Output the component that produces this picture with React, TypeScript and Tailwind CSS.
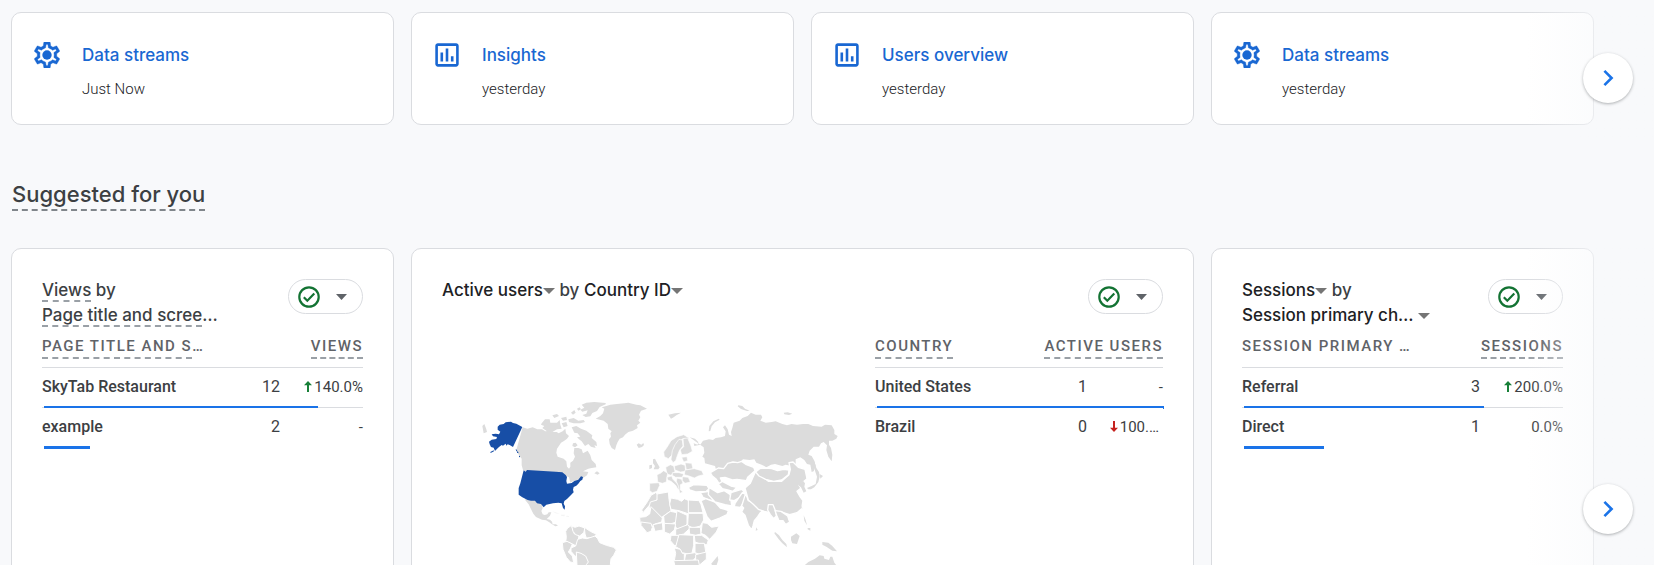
import type { ReactNode } from "react";
import { clsx } from "clsx";

type Recent = { title: string; time: string; icon: "settings" | "chart" };

type Row = {
  name: string;
  value: string;
  change: string;
  trend?: "up" | "down";
  share: number;
};

const recents: Recent[] = [
  { title: "Data streams", time: "Just Now", icon: "settings" },
  { title: "Insights", time: "yesterday", icon: "chart" },
  { title: "Users overview", time: "yesterday", icon: "chart" },
  { title: "Data streams", time: "yesterday", icon: "settings" },
];

const pageRows: Row[] = [
  { name: "SkyTab Restaurant", value: "12", change: "140.0%", trend: "up", share: 85.7 },
  { name: "example", value: "2", change: "-", share: 14.3 },
];

const countryRows: Row[] = [
  { name: "United States", value: "1", change: "-", share: 100 },
  { name: "Brazil", value: "0", change: "100.…", trend: "down", share: 0 },
];

const sessionRows: Row[] = [
  { name: "Referral", value: "3", change: "200.0%", trend: "up", share: 75 },
  { name: "Direct", value: "1", change: "0.0%", share: 25 },
];

function SettingsIcon() {
  return (
    <svg viewBox="2 2 20 20" className="size-[26px]" fill="currentColor" aria-hidden="true">
      <path d="M19.43 12.98c.04-.32.07-.64.07-.98 0-.34-.03-.66-.07-.98l2.11-1.65c.19-.15.24-.42.12-.64l-2-3.46c-.09-.16-.26-.25-.44-.25-.06 0-.12.01-.17.03l-2.49 1c-.52-.4-1.08-.73-1.69-.98l-.38-2.65C14.46 2.18 14.25 2 14 2h-4c-.25 0-.46.18-.49.42l-.38 2.65c-.61.25-1.17.59-1.69.98l-2.49-1c-.06-.02-.12-.03-.18-.03-.17 0-.34.09-.43.25l-2 3.46c-.13.22-.07.49.12.64l2.11 1.65c-.04.32-.07.65-.07.98 0 .33.03.66.07.98l-2.11 1.65c-.19.15-.24.42-.12.64l2 3.46c.09.16.26.25.44.25.06 0 .12-.01.17-.03l2.49-1c.52.4 1.08.73 1.69.98l.38 2.65c.03.24.24.42.49.42h4c.25 0 .46-.18.49-.42l.38-2.65c.61-.25 1.17-.59 1.69-.98l2.49 1c.06.02.12.03.18.03.17 0 .34-.09.43-.25l2-3.46c.12-.22.07-.49-.12-.64l-2.11-1.65zm-1.98-1.71c.04.31.05.52.05.73 0 .21-.02.43-.05.73l-.14 1.13.89.7 1.08.84-.7 1.21-1.27-.51-1.04-.42-.9.68c-.43.32-.84.56-1.25.73l-1.06.43-.16 1.13-.2 1.35h-1.4l-.19-1.35-.16-1.13-1.06-.43c-.43-.18-.83-.41-1.23-.71l-.91-.7-1.06.43-1.27.51-.7-1.21 1.08-.84.89-.7-.14-1.13c-.03-.31-.05-.54-.05-.74s.02-.43.05-.73l.14-1.13-.89-.7-1.08-.84.7-1.21 1.27.51 1.04.42.9-.68c.43-.32.84-.56 1.25-.73l1.06-.43.16-1.13.2-1.35h1.39l.19 1.35.16 1.13 1.06.43c.43.18.83.41 1.23.71l.91.7 1.06-.43 1.27-.51.7 1.21-1.07.85-.89.7.14 1.13z" stroke="currentColor" strokeWidth="0.3" />
      <circle cx="12" cy="12" r="3.6" />
    </svg>
  );
}

function ChartIcon() {
  return (
    <svg viewBox="2 2 20 20" className="size-[26px]" fill="currentColor" aria-hidden="true">
      <path d="M9 17H7v-7h2v7zm4 0h-2V7h2v10zm4 0h-2v-4h2v4zm2 2H5V5h14v14zm0-16H5c-1.1 0-2 .9-2 2v14c0 1.1.9 2 2 2h14c1.1 0 2-.9 2-2V5c0-1.1-.9-2-2-2z" />
    </svg>
  );
}

function Caret() {
  return (
    <svg viewBox="0 0 12 6" className="inline-block h-[6px] w-3 align-middle" fill="#757575" aria-hidden="true">
      <path d="M0 0h12L6 6z" />
    </svg>
  );
}

function TrendArrow({ trend }: { trend: "up" | "down" }) {
  return (
    <svg
      viewBox="0 0 8 11"
      className={clsx("mr-[2px] inline-block h-[11px] w-2 align-baseline", trend === "down" ? "rotate-180 text-[#c5221f]" : "text-[#188038]")}
      fill="currentColor"
      aria-hidden="true">
      <path d="M4 0l4 4.2H5V11H3V4.2H0z" />
    </svg>
  );
}

function NextButton({ label }: { label: string }) {
  return (
    <button
      type="button"
      aria-label={label}
      className="absolute top-1/2 right-[21px] z-20 flex size-[50px] -translate-y-1/2 items-center justify-center rounded-full bg-white text-[#1a73e8] shadow-[0_1px_3px_rgba(60,64,67,0.4)]">
      <svg viewBox="0 0 12 18" className="h-[18px] w-3" fill="none" stroke="currentColor" strokeWidth="2.6" aria-hidden="true">
        <path d="M2.4 1.8L9.6 9l-7.2 7.2" />
      </svg>
    </button>
  );
}

function QualityButton() {
  return (
    <button
      type="button"
      aria-label="Data quality"
      className="mt-px flex h-[35px] w-[75px] shrink-0 items-center justify-between rounded-full border border-[#dadce0] pr-[15px] pl-[9px]">
      <svg viewBox="0 0 22 22" className="size-[22px]" fill="none" stroke="#137333" strokeWidth="2.2" aria-hidden="true">
        <circle cx="11" cy="11" r="9.7" />
        <path d="M5.8 11.2l3.500 3.500 7-7.200" />
      </svg>
      <svg viewBox="0 0 11 6" className="h-[6px] w-[11px]" fill="#5f6368" aria-hidden="true">
        <path d="M0 0h11L5.5 6z" />
      </svg>
    </button>
  );
}

// Fades the last card out into the page background
function Fade() {
  return <div className="pointer-events-none absolute inset-y-0 right-0 z-10 w-32 bg-linear-to-r from-[#f8f9fb]/0 to-[#f8f9fb]" />;
}

function Dashed({ children }: { children: string }) {
  return <span className="border-b-2 border-dashed border-[#9aa0a6]">{children}</span>;
}

function DataTable({
  name,
  metric,
  rows,
  narrow,
}: {
  name: ReactNode;
  metric: string;
  rows: Row[];
  narrow?: boolean;
}) {
  return (
    <table className="w-full font-[Roboto,sans-serif] text-[#3c4043]">
      <thead>
        <tr className="h-[39px] border-b border-[#dadce0] align-bottom text-[15px] leading-[22px] tracking-widest text-[#5f6368] uppercase">
          <th className="pb-2 text-left font-medium whitespace-nowrap">{name}</th>
          <th colSpan={2} className="pb-2 text-right font-medium whitespace-nowrap">
            <span className="inline-block border-b-2 border-dashed border-[#9aa0a6]">{metric}</span>
          </th>
        </tr>
      </thead>
      <tbody>
        {rows.map((row, i) => (
          <tr key={row.name} className={clsx("relative h-10 bg-white", i < rows.length - 1 && "border-b border-[#dadce0]")}>
            <th className="text-left text-base font-medium">
              {row.name}
              <span className="absolute top-[39px] -right-px left-0.5 h-[3px]">
                <span className="block h-full bg-[#1a73e8]" style={{ width: `${row.share}%` }} />
              </span>
            </th>
            <td className="text-right text-base">{row.value}</td>
            <td className={clsx("text-right text-[15px] whitespace-nowrap", narrow ? "w-[76px]" : "w-[83px]", row.trend === "down" && "pr-1")}>
              {row.trend && <TrendArrow trend={row.trend} />}
              {row.change}
            </td>
          </tr>
        ))}
      </tbody>
    </table>
  );
}

function WorldMap() {
  return (
    <svg viewBox="-36 0 1200 600" className="w-[400px]" fill="#dcdcdc" strokeLinejoin="round" role="img" aria-label="Active users by country">
      {/* North America */}
      <path d="M155 112l14 4 16-4 14 6 14 0 10 6 14-2 10 4 10 0 6 4 12-6 8-8 2 14 9 8-6 8-8 6-10 6-12 18-2 12 4 12 18 6 8 8 2 16 6 6 4-6 0-12 8-6 6-12-4-10 2-16 12 0 10 4 4 12 14-8 8 14 4 14 12 12 2 10-14 2-10 2-16 8 16 2-4 10-12 8-16 8-14 2-8 4-4-16-22-10-102-4-14-8-4-14 0-20-8-10-8-16z" />
      <path d="M212 100l10-12 14 0 2 10 20 0 8-8 2 14 4 12-14 2-14 8-16-2-14-10 6-6-10-4z" />
      <path d="M302 112l14-4 14 8 16 6 8 6 10 8-2 8 14 12 2 12-8-2 4 8-14-4-8-8-10 6-10-14-8-6-6-6 10-2-8-10-10-2z" />
      <path d="M332 44l14-6 24-2 34 3 0 4-18 8-8 12-14 6-6 10-14 2-10-6 12-4 4-10-16 4-6-6 12-6z" />
      <path d="M244 76l14-4 6 6-14 6zM270 84l16-4 2 10-12 2zM292 88l16-4 14 8 16-2 4 6-14 4-20 0-14-4zM272 100l14-4 4 12-12 4zM300 68l10-8 4 8-8 6zM318 56l8-4 4 6-8 4zM306 160l8-2 6 8-8 6-8-4zM370 250l8-6 8 6-6 4zM34 108l6-6 6 16 2 8-10 4z" />
      <path d="M374 86l14-8 8-8 4-14-8-4 14-4 12-4 20-2 22-2 12-2 24 6 12 2 20 10-18 6-6 12 4 8-6 10 6 6-10 8 2 8-14 8-14 4-10 8-6 8-10 4-6 10-4 10-4 14-10-6-6-12-2-14 6-8-2-10 4-6-10-8-2-14-12-10z" />
      <path d="M497 164l6-4 8 4 6-5 2 6-6 6-10 3z" />
      <path d="M163 319l12 4 22 0 8 12 8 8 2 12-4 8 4 10 6 2 8-2 4-6 8 0-4 10-6 6-4 4 10 2 6 6 2 8 10 0 6 4-8 2-10-6-8-6-10-6-12-2-18-8-8-10-6-12-8-16-10-12z" />
      <path d="M244 364l14 4 8 4-12-2zM270 374l12 0-2 5-10-2zM286 377l8 1v3l-8-1z" opacity=".3" />
      {/* South America */}
      <g stroke="#fff" strokeWidth="3">
        <path d="M284 424l6-10 12-8 2 8 6 18 14 2-2 16-6 18-16-8-16-4 2-14z" />
        <path d="M302 408l10 4 12-4 18 6-4 14-12 10-12-4-8-10z" />
        <path d="M340 412l18 12 8 4 10 4-6 10-24 2-4-12z" />
        <path d="M274 458l14-4 16 8-6 14-6 10 12 12 4 20-10-2-12-14-10-24z" />
        <path d="M300 474l14-6 6-20 14-4 14 2 24-8 8 8 6 12 20 8 22 6 8 8-8 16-8 10-2 18-10 30-60 0-8-30-12-20-16-6-12-14z" />
        <path d="M316 486l14 4 14 8 8 18-6 8-16 40-6 0-6-36z" />
      </g>
      {/* United States */}
      <g fill="#174ea6">
        <path d="M80 110l6-6 12-2 6-5 16-2 6 4 10 2 18 10-28 60-10-6-6-2-4 4-2-6-8 6-4-2-8 6-4 4-8 8-4-10-8-2-4-8-2-8 8-6 14-2 2-6-12-2-4-6 12-2 10 2 4-8-8-6z" />
        <path d="M158 241l6 4 4-5 86 5 20 2 10 8 4 6-2 12 2 8 14-2 8-6 12-4 8-10 6 2-2 8-6 4-6 8-6 6-8 4-2 8 2 8-8 8-12 12-8 6-2 8 4 8-1 10-5-5-4-14-10-2-16 2-10 2-10 2-8 8-8-10-12-2-6-8-12 0-10-2-16-8-11-8 0-20 5-14z" />
        <path d="M134 177l3 2 2 5-3 0zM138 184l4 2 0 4-4-2zM144 197l3 1 0 4-3-1zM58 186l10-5 1 3-10 5z" />
      </g>
      <g transform="translate(480 0)">
        {/* Russia and the Arctic islands */}
        <path d="M176 142l16 4 10 10-2 8-12-4 2 8 18-4 8-12 18-4 12 2 8-6 16-2 12-4 2-14-8-12 6-6 8 12 4 16 8 4-2-12 4-12 4-16 18-6 8-8 16-6 10-10 14 6 16 0 4 8-6 10 16 6 18-2 12-2 20 8 14 4 14-4 16 2 18-2 16 0 14 6 26 2 10-6 20 2 8 14 0 12 10 6-4 8-12 6-10 0 0 12 6 10 4 20-2 20-10-14-6-20 2-14-10-10-8 4-6 10-16 0-12 12-4 12 10 4 8 14 4 16-6 16-6 2-4-22-10-2-8-12-12-8-14 6 0 16-12 4-18-4-10 4-22-6-12 2-14 8-14-8-16-6-6-10-14 2-20-2-8 8-16 2-20 6-2 18-8 6 2 14-8 2-14-10-6-12-4-14-14-4-16-4-2-16-6-4 6-12-2-16z" />
        <path d="M233 124l2-16 12-14 16-8 3 3-14 8-10 12-4 14zM322 46l12 2 8 8 14 6-8 1-18-6-10-8zM458 68l12-1 14 4-10 4-14-2zM112 74l20-4 18-2-14 8-8 6-8 4-4-6z" />
        {/* Europe */}
        <g stroke="#fff" strokeWidth="2">
          <path d="M100 200l-2-14 10-14 12-20 18-12 20-6 16 10-4 6-14-4-14 10-12 16-6 22-12 12z" />
          <path d="M120 208l4-26 8-18 12-16 10 2 2 18-10 12-6 14-6 18-8 6z" />
          <path d="M156 146l14-2 10 24 4 16-14 8-18 2-4-14 10-10z" />
          <path d="M152 202l16-2 2 12-12 4z" />
          <path d="M104 232l14-8 10 4 4 16-12 12-12-4z" />
          <path d="M130 228l20-6 12 4 2 18-16 2-16-6z" />
          <path d="M162 218l20 2 4 16-20 4z" />
          <path d="M162 240l28-4 22 6 6 12-16 4-12 6-16-6-14-4z" />
          <path d="M78 254l10-4 10-8 12 8-2 10-2 16-12 4-14-4z" />
          <path d="M56 280l28-2 2 8-8 18-14 4-8-6z" />
          <path d="M108 262l14-4 4 10 14 14 8 10-6 8-8-14-14-12-10-4z" />
          <path d="M124 248l20 0 14 4-4 10-20 0-10-6z" />
          <path d="M138 264l14 4 4 12-8 4 0 16 8 6-10 4-4-22-6-14z" />
          <path d="M154 260l18 2 6 14-16 4-8-8z" />
        </g>
        <path d="M66 208l6-2 6 12 8 14-4 6-14 0 4-10-6-8zM55 226l8-2 0 10-8 4z" />
        {/* Africa */}
        <g stroke="#fff" strokeWidth="3">
          <path d="M50 334l10-18 14-8 8 6-4 18-18 8-24 28-4-8z" />
          <path d="M78 312l34-6 2 22 6 34-28 20-38-30 4-16 20-6z" />
          <path d="M120 324l20 4 12 6 8-8 14 6 0 40-30-10-24-4-4-16z" />
          <path d="M172 330l32 2 6 12 6 24-44 0z" />
          <path d="M60 350l34 34-2 12-20 6-8 6-36-6-2-20 18-2 12-8z" />
          <path d="M30 396l30 4 4 12-4 12-12 4-18-22z" />
          <path d="M98 378l20-14 20 4-2 28-18 6-18-2z" />
          <path d="M138 362l30 14 0 26-10 14-18 6-8-16z" />
          <path d="M172 370l44 0 2 20-10 18-22 6-16-8z" />
          <path d="M66 404l28-6 2 22-24 4z" />
          <path d="M100 400l34 2-4 18-14 12-16-6z" />
          <path d="M134 418l36-14 8 10-20 18-24 6z" />
          <path d="M174 412l34 0 2 20-16 4-18-4z" />
          <path d="M214 398l14 2 14 12 22-4-8 18-20 22-12-12-14-6z" />
          <path d="M120 436l22 0 0 22-10 10-14-16z" />
          <path d="M144 434l44 2 0 30-6 28-30-6-4-10-14-8z" />
          <path d="M190 436l22 0 20 14-4 14-14 0-22-8z" />
          <path d="M192 460l28 0 4 24-10 12-22-8z" />
          <path d="M130 474l18 4 6 12 6 0 0 22-30 0 4-22z" />
          <path d="M164 492l28-4 8 8-16 18-24 0z" />
          <path d="M194 494l32-8 0 22-24 20-8-16z" />
          <path d="M128 512l74-2 4 20-16 40-48 0z" />
        </g>
        <path d="M260 498l2 12-8 24-12 10 0-24z" />
        {/* Middle East and Asia */}
        <g stroke="#fff" strokeWidth="4">
          <path d="M172 292l16-8 40 2 6 10-8 8-32 2-18-6z" />
          <path d="M208 308l28-4 12 24-8 4-24-10z" />
          <path d="M210 332l14-6 28 10 16 18 14 4 10 4-4 12-22 10-26 10-12-14z" />
          <path d="M234 292l10 6 16 10 20-6 18 12 4 34-20-4-30-8-20-22z" />
          <path d="M238 248l24-14 16 2 12-16 16-4 14 2 12-4 14 10 22 8 4 10-22 20-4 10-28-4-14 2-22-8-14 2 8 16-12 0-8-12-12-10z" />
          <path d="M262 282l12-8 26 14 18 4-12 12-16-4-16-4z" />
          <path d="M300 308l32-10 6 6-12 18-16 10-14-2z" />
          <path d="M312 340l22-32 16 8-10 18-12 18-18-2z" />
          <path d="M344 310l8 22 28 10 14 4 6 12-12 10-8 12-10 12-4 16-4 12-10-14-10-30-10-10 6-12-6-6z" />
          <path d="M342 294l16-14 14-32 12-4 6 12 22 18 40 0 22-20 4-16-4-20 12-2 16 16 20 6 6 28-16 14-8 6 6 8-12 10 8 14 10 14-4 24-14 12-22 6-12-4-12-4-10 8-12-10-12 4-18-4-18-6-16-16-14-12z" />
          <path d="M374 246l12-10 18-2 18 2 18 6 18-4 16 2-2 14-20 16-24 4-24-6-20-10z" />
          <path d="M412 344l14 0 8 20 2 14-8 8-10-12-8-14z" />
          <path d="M432 362l18 2 20 14 6 18-12 8-8-12-12 0-6-14z" />
        </g>
        <path d="M500 284l16-12 6 8-2 10 6 14-8 4-8-16zM532 298l8 0 10-6 12-16 4-16-2-14-8-12-6-20-4 4 6 24 6 18-4 22-12 6-14 6zM566 252l10 6-8 8zM376 412l4 8-6 2zM512 346l2 10-3-2zM518 376l6 14 4 16-8-14zM530 414l8 0 0 8-8-4z" />
        <path d="M432 426l12 10 10 14 12 12 2 10-14-12-12-14-12-16zM480 440l16-10 10 8-8 24-14-2-4-10zM574 456l18 2 12 10 14 16-14-2-18-12-12-6z" />
        <path d="M516 530l16-14 20-10 14-10 12 2 2 8 14 4 4-10 6 0 6 18 14 18 4 30-94 10z" />
      </g>
    </svg>
  );
}

export default function App() {
  return (
    <main className="h-screen overflow-hidden bg-[#f8f9fb] pt-3 font-[Inter,sans-serif]">
      {/* Recently accessed */}
      <section aria-label="Recently accessed" className="relative">
        <div className="grid grid-cols-4 gap-[17px] pr-[60px] pb-[18px] pl-[11px]">
          {recents.map((item, i) => (
            <article key={i} className="flex h-[113px] gap-[22px] rounded-[10px] border border-[#dadce0] bg-white pt-[29px] pl-[22px]">
              <div className="text-[#1967d2]">{item.icon === "settings" ? <SettingsIcon /> : <ChartIcon />}</div>
              <div>
                <a href="#" className="block text-[17px] leading-[26px] font-medium text-[#1967d2]">
                  {item.title}
                </a>
                <p className="mt-2 font-[Roboto,sans-serif] text-[15px] leading-[26px] font-light text-[#202124]">{item.time}</p>
              </div>
            </article>
          ))}
        </div>
        <Fade />
        <NextButton label="Next recent items" />
      </section>

      <h2 className="mt-9 ml-3 w-fit border-b-2 border-dashed border-[#80868b] text-[22px] leading-[30px] font-medium text-[#3c4043]">
        Suggested for you
      </h2>

      {/* Suggested cards */}
      <section aria-label="Suggested for you" className="relative mt-[37px]">
        <div className="grid grid-cols-4 gap-[17px] pr-[60px] pb-[18px] pl-[11px]">
          <article className="min-h-[504px] rounded-[10px] border border-[#dadce0] bg-white px-[30px] pt-[29px]">
            <div className="flex min-h-[50px] items-start justify-between">
              <h3 className="text-[17px] leading-[25px] font-medium whitespace-nowrap text-[#3c4043]">
                <Dashed>Views</Dashed> by
                <br />
                <Dashed>Page title and scree</Dashed>…
              </h3>
              <QualityButton />
            </div>
            <DataTable
              name={
                <>
                  <span className="inline-block border-b-2 border-dashed border-[#9aa0a6]">Page title and s</span>…
                </>
              }
              metric="Views"
              rows={pageRows}
            />
          </article>

          <article className="col-span-2 min-h-[504px] rounded-[10px] border border-[#dadce0] bg-white px-[30px] pt-[29px]">
            <div className="flex min-h-[50px] items-start justify-between">
              <h3 className="text-[17px] leading-[25px] font-medium whitespace-nowrap text-[#3c4043]">
                <button type="button" className="text-[#202124]">
                  Active users
                  <Caret />
                </button>{" "}
                by{" "}
                <button type="button" className="text-[#202124]">
                  Country ID
                  <Caret />
                </button>
              </h3>
              <QualityButton />
            </div>
            <div className="flex">
              <div className="flex flex-1 justify-center pt-[62px]">
                <WorldMap />
              </div>
              <div className="w-72">
                <DataTable
                  name={<span className="inline-block border-b-2 border-dashed border-[#9aa0a6]">Country</span>}
                  metric="Active users"
                  rows={countryRows}
                  narrow
                />
              </div>
            </div>
          </article>

          <article className="min-h-[504px] rounded-[10px] border border-[#dadce0] bg-white px-[30px] pt-[29px]">
            <div className="flex min-h-[50px] items-start justify-between">
              <h3 className="text-[17px] leading-[25px] font-medium whitespace-nowrap text-[#3c4043]">
                <button type="button" className="text-[#202124]">
                  Sessions
                  <Caret />
                </button>{" "}
                by
                <br />
                <button type="button" className="text-[#202124]">
                  Session primary ch… <Caret />
                </button>
              </h3>
              <QualityButton />
            </div>
            <DataTable
              name={<span className="inline-block border-b-2 border-transparent">Session primary …</span>}
              metric="Sessions"
              rows={sessionRows}
            />
          </article>
        </div>
        <Fade />
        <NextButton label="Next suggestions" />
      </section>
    </main>
  );
}
